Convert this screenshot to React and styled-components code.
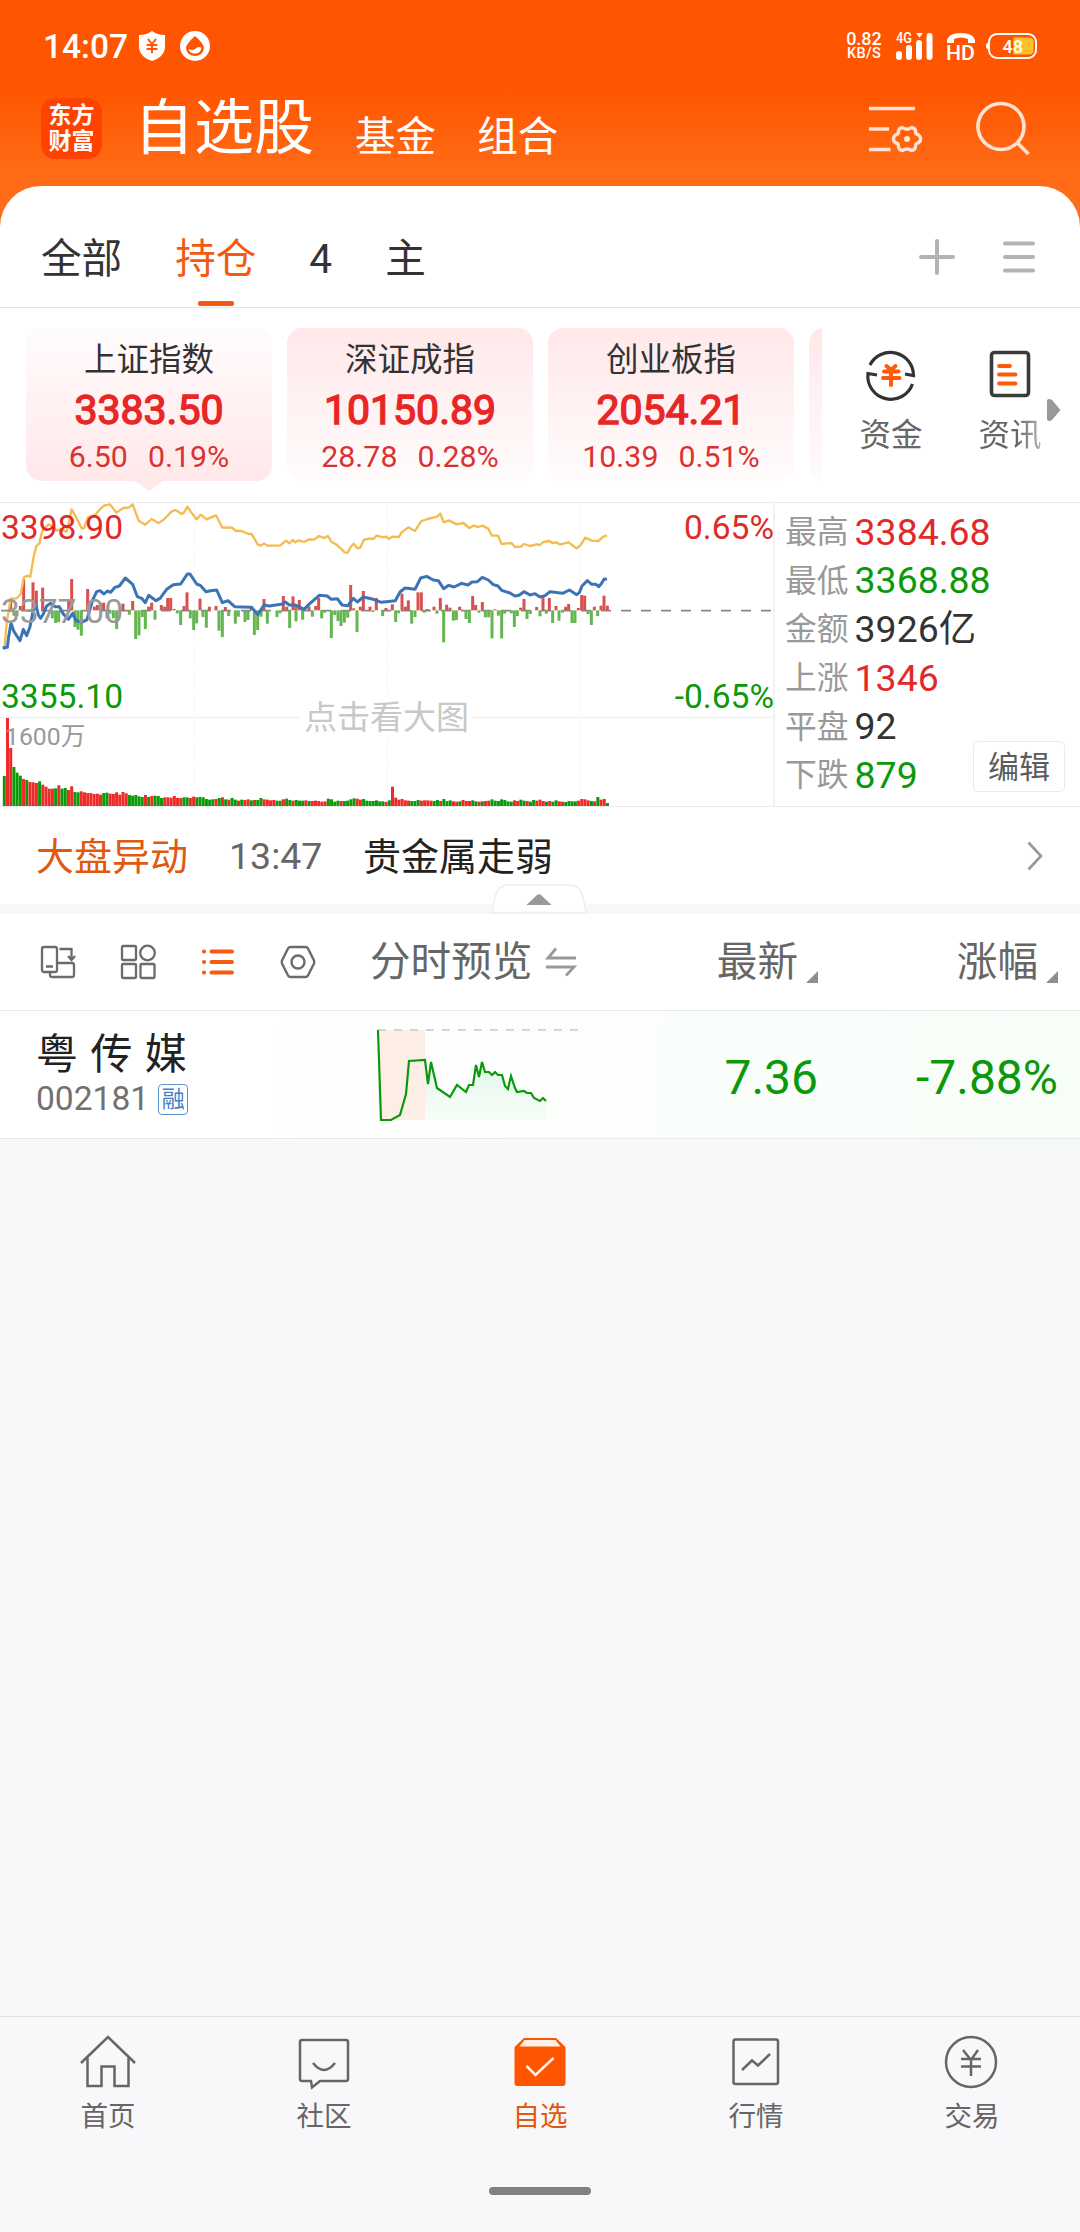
import React, { useState } from "react";
import styled, { createGlobalStyle } from "styled-components";

const RED = "#e02a2a";
const GREEN = "#0b990b";
const ORANGE = "#ff5500";

const GlobalStyle = createGlobalStyle`
  * {
    box-sizing: border-box;
  }
  body {
    margin: 0;
    background: #f7f8fa;
    font-family: Roboto, "Noto Sans CJK SC", sans-serif;
    line-height: 1;
  }
  svg {
    display: block;
    flex: none;
    overflow: visible;
  }
`;

const Page = styled.div`
  display: flex;
  flex-direction: column;
  width: 1080px;
  height: 2232px;
  overflow: hidden;
  background: #f7f8fa
    linear-gradient(#ff5500 0, #ff5500 88px, #ff6b17 172px, #ff6e1a 240px)
    no-repeat 0 0 / 100% 240px;
`;

/* ---------- header ---------- */
const StatusBar = styled.div`
  display: flex;
  align-items: center;
  height: 92px;
  padding: 0 42px 0 43px;
  color: #fff;
`;
const Clock = styled.span`
  width: 96px;
  font-size: 33.5px;
  font-weight: 500;
  padding-top: 1px;
`;
const StatusGroup = styled.div`
  display: flex;
  align-items: center;
  gap: ${(props) => props.gap}px;
  margin-left: ${(props) => props.right && "auto"};
`;
const Speed = styled.div`
  display: flex;
  flex-direction: column;
  align-items: center;
  width: 36px;
  margin-right: 4px;
  font-weight: 500;
  white-space: nowrap;
  span:first-child {
    font-size: 18px;
    line-height: 15px;
  }
  span:last-child {
    font-size: 14.5px;
    line-height: 15px;
    letter-spacing: 0.3px;
  }
`;
const TitleBar = styled.div`
  display: flex;
  align-items: center;
  height: 94px;
  padding: 0 50px 21px 41px;
`;
const Logo = styled.div`
  display: flex;
  align-items: center;
  justify-content: center;
  width: 61px;
  height: 61px;
  margin-right: 32px;
  padding-top: 1px;
  border-radius: 14px;
  background: #ff4102;
  color: #fff;
  font-size: 23px;
  font-weight: 700;
  line-height: 26px;
  text-align: center;
`;
const Titles = styled.div`
  display: flex;
  align-items: flex-end;
  gap: 41px;
  color: #fff;
`;
const Title = styled.span`
  font-size: ${(props) => (props.main ? 60 : 40.6)}px;
  padding-bottom: ${(props) => !props.main && "1px"};
`;
const HeadIcons = styled.div`
  display: flex;
  align-items: center;
  gap: 54px;
  margin-left: auto;
`;

/* ---------- sheet ---------- */
const Sheet = styled.div`
  background: #fff;
  border-radius: 41px 41px 0 0;
`;
const Tabs = styled.div`
  display: flex;
  align-items: stretch;
  gap: 53px;
  height: 122px;
  padding: 0 44px 0 41px;
  border-bottom: 1px solid #e4e4e6;
`;
const Tab = styled.span`
  display: flex;
  flex-direction: column;
  align-items: center;
  padding-top: 53px;
  font-size: 40.6px;
  color: ${(props) => (props.active ? "#f45a0f" : "#333")};
  cursor: pointer;
  &::after {
    content: "";
    width: 36px;
    height: 5px;
    margin: auto 0 1px;
    border-radius: 2px;
    background: ${(props) => props.active && "#f45a0f"};
    display: ${(props) => !props.active && "none"};
  }
`;
const TabIcons = styled.div`
  display: flex;
  align-items: center;
  gap: 45px;
  margin-left: auto;
  padding-top: 20px;
`;
const IndexRow = styled.div`
  display: flex;
  height: 194px;
  padding-top: 20px;
`;
const Cards = styled.div`
  display: flex;
  gap: 15px;
  width: 822px;
  height: 174px;
  padding-left: 26px;
  overflow: hidden;
`;
const Card = styled.div`
  position: relative;
  flex: none;
  display: flex;
  flex-direction: column;
  align-items: center;
  width: 246px;
  height: 153px;
  padding-top: 15px;
  border-radius: 15px;
  background: ${(props) =>
    props.active
      ? "linear-gradient(#fffcfc, #ffe8ea)"
      : "linear-gradient(#ffe8ea, #fffcfc)"};
  &::after {
    content: "";
    display: ${(props) => !props.active && "none"};
    position: absolute;
    top: 153px;
    left: 109px;
    border: 14px solid transparent;
    border-width: 10px 14px 0;
    border-top-color: #ffe8ea;
  }
`;
const CardName = styled.span`
  font-size: 32.5px;
  line-height: 34px;
  color: #333;
`;
const CardPrice = styled.span`
  margin-top: 12px;
  font-size: 41px;
  line-height: 42px;
  color: #e82626;
  -webkit-text-stroke: 1.4px #e82626;
`;
const CardChange = styled.div`
  display: flex;
  gap: 20px;
  margin-top: 10px;
  font-size: 30.3px;
  line-height: 32px;
  color: #d93232;
`;
const Shortcut = styled.div`
  display: flex;
  flex-direction: column;
  align-items: center;
  gap: 20px;
  width: ${(props) => props.width}px;
  padding-top: 20px;
  font-size: 31.5px;
  color: #666;
  & + & {
    margin-left: 13px;
  }
`;
const FadeText = styled.span`
  background: linear-gradient(90deg, #666 60%, #b5b5b5);
  background-clip: text;
  color: transparent;
`;
const MoreArrow = styled.div`
  padding-top: 71px;
`;

/* ---------- index chart ---------- */
const Market = styled.div`
  display: flex;
  height: 305px;
  border-top: 1px solid #ececec;
  border-bottom: 1px solid #ececec;
`;
const ChartBox = styled.div`
  position: relative;
  width: 775px;
  height: 303px;
  border-right: 2px solid #f2f2f2;
`;
const ChartLabel = styled.span`
  position: absolute;
  top: ${(props) => props.top}px;
  left: ${(props) => !props.right && "1px"};
  right: ${(props) => props.right && "-1px"};
  font-size: 33.6px;
  color: ${(props) => props.color};
`;
const VolumeLabel = styled.span`
  position: absolute;
  top: 222px;
  left: 5px;
  font-size: 24.8px;
  color: #999;
`;
const ChartHint = styled.span`
  position: absolute;
  top: 195px;
  left: 300px;
  width: 173px;
  font-size: 33px;
  line-height: 40px;
  text-align: center;
  color: #c8c8c8;
  background: #fff;
`;
const Stats = styled.div`
  position: relative;
  flex: 1;
  display: flex;
  flex-direction: column;
  padding: 5px 0 0 10px;
`;
const Stat = styled.div`
  display: flex;
  align-items: center;
  gap: 6px;
  height: 48.7px;
  font-size: 37.4px;
  color: ${(props) => props.color};
  span {
    padding-top: 1px;
    font-size: 31.8px;
    color: #999;
  }
`;
const EditButton = styled.button`
  position: absolute;
  right: 15px;
  bottom: 14px;
  width: 92px;
  height: 51px;
  padding: 0 0 4px;
  border: 1px solid #ebebeb;
  border-radius: 5px;
  background: #fff;
  font-family: inherit;
  font-size: 31px;
  color: #5c5c5c;
`;
const News = styled.div`
  position: relative;
  display: flex;
  align-items: center;
  height: 97px;
  padding: 2px 37px 0 36px;
  font-size: 38px;
  color: #222;
`;
const NewsTag = styled.span`
  width: 193px;
  color: #e0590f;
`;
const NewsTime = styled.span`
  width: 134px;
  font-size: 37.5px;
  color: #666;
`;
const NewsArrow = styled.div`
  margin-left: auto;
  padding-bottom: 2px;
`;
const Handle = styled.div`
  position: absolute;
  top: 77px;
  left: 491px;
`;
const Band = styled.div`
  height: 10px;
  background: #f6f7f9;
`;

/* ---------- stock list ---------- */
const ListHead = styled.div`
  display: flex;
  align-items: center;
  height: 97px;
  padding: 0 22px 0 41px;
  border-bottom: 1px solid #e9e9e9;
  font-size: 40.6px;
  color: #666;
`;
const ViewIcons = styled.div`
  display: flex;
  align-items: center;
  gap: 46px;
  width: 329px;
`;
const HeadCell = styled.div`
  display: flex;
  align-items: center;
  gap: ${(props) => (props.sort ? 8 : 14)}px;
  justify-content: ${(props) => props.sort && "flex-end"};
  width: ${(props) => props.width}px;
`;
const Corner = styled.i`
  align-self: flex-end;
  border: 6.5px solid #8e8e93;
  border-top-color: transparent;
  border-left-color: transparent;
  margin-bottom: -1px;
`;
const StockRow = styled.div`
  display: flex;
  align-items: center;
  height: 128px;
  padding: 0 22px 0 36px;
  border-bottom: 1px solid #e9e9e9;
  background: linear-gradient(90deg, #fff 25%, #fafefb 70%, #f7fdf7);
`;
const StockName = styled.div`
  display: flex;
  flex-direction: column;
  gap: 6px;
  width: 340px;
  padding-top: 1px;
  font-size: 42px;
  word-spacing: 2px;
  color: #222;
`;
const StockCode = styled.div`
  display: flex;
  align-items: center;
  gap: 9px;
  font-size: 33.6px;
  color: #717171;
`;
const Badge = styled.span`
  width: 30px;
  height: 31px;
  border: 1.5px solid #5b94cf;
  border-radius: 4px;
  font-size: 23px;
  line-height: 29px;
  text-align: center;
  color: #4383c4;
`;
const Quote = styled.span`
  width: ${(props) => props.width}px;
  padding-top: 6px;
  font-size: 48px;
  text-align: right;
  color: ${GREEN};
`;

/* ---------- bottom navigation ---------- */
const BottomNav = styled.div`
  margin-top: auto;
  height: 216px;
  border-top: 1px solid #e0e0e2;
  background: #f8f8fa;
`;
const NavItems = styled.div`
  display: grid;
  grid-template-columns: repeat(5, 1fr);
  height: 170px;
  padding-top: 17px;
`;
const NavItem = styled.div`
  display: flex;
  flex-direction: column;
  align-items: center;
  gap: 13px;
  font-size: 27.5px;
  color: ${(props) => (props.active ? "#e0590f" : "#666")};
  cursor: pointer;
`;
const HomeBar = styled.div`
  width: 102px;
  height: 8px;
  margin: 0 auto;
  border-radius: 4px;
  background: #808080;
`;

/* chart series use three units per pixel */
const avgLine =
  "13,480 20,400 32,326 50,325 62,312 72,262 82,257 91,260 100,205 109,168 118,160 127,122 146,103 158,110 170,122 180,118 200,125 206,100 215,58 225,75 235,95 246,116 252,114 264,82 275,78 285,75 300,58 312,47 330,43 349,68 370,54 388,52 398,43 408,70 416,92 436,104 455,87 475,99 490,90 515,64 527,60 545,72 553,66 562,50 572,65 590,88 602,74 620,88 648,76 667,113 695,112 708,123 725,123 745,132 755,132 773,163 783,167 792,160 802,167 840,167 858,152 868,160 878,150 886,157 896,151 912,156 928,148 942,149 957,138 972,144 984,138 994,155 1010,164 1034,187 1043,188 1052,171 1061,161 1072,175 1081,173 1091,150 1110,145 1120,147 1130,137 1150,142 1158,140 1167,146 1177,140 1196,141 1206,126 1225,112 1245,123 1263,94 1282,87 1312,80 1321,71 1331,97 1346,91 1370,103 1390,99 1408,114 1420,107 1435,111 1447,107 1465,116 1476,137 1494,137 1505,162 1534,159 1545,171 1563,170 1572,162 1590,168 1610,163 1620,165 1630,156 1648,153 1657,159 1668,157 1680,163 1706,157 1720,168 1730,175 1742,165 1756,143 1775,152 1795,153 1810,140 1821,136";
const priceLine =
  "8,473 22,472 26,440 33,400 42,425 50,437 60,452 70,418 80,437 90,410 100,360 108,345 115,375 122,385 130,372 140,348 152,340 165,350 178,350 190,372 205,388 218,370 228,392 245,396 260,390 268,365 278,330 290,305 300,302 312,312 322,303 332,307 345,292 358,288 376,264 398,283 412,320 425,325 436,338 446,316 468,332 480,325 500,298 520,284 542,282 562,252 570,252 590,282 602,287 618,305 632,302 650,300 667,338 684,332 704,350 755,352 773,374 792,345 808,348 848,342 856,336 868,345 886,345 912,358 930,340 958,316 982,318 994,328 1012,326 1026,345 1044,347 1052,335 1060,325 1072,336 1090,321 1120,328 1144,337 1186,332 1200,306 1215,294 1245,298 1262,264 1280,259 1300,270 1315,272 1331,296 1346,286 1362,291 1385,280 1404,285 1416,276 1432,275 1447,262 1465,270 1480,284 1494,288 1505,301 1530,309 1545,318 1557,316 1572,305 1590,315 1605,311 1620,321 1635,317 1650,305 1688,310 1708,300 1730,314 1738,308 1746,288 1762,272 1775,283 1788,283 1796,290 1805,280 1812,268 1821,267";
const flowBars =
  "32,330 61,348 71,268 99,277 109,302 128,293 206,330 215,267 263,297 283,350 292,345 302,340 311,338 369,341 398,333 446,350 455,338 484,345 494,350 503,324 512,324 522,357 552,348 561,307 600,326 628,350 648,348 676,351 754,350 792,327 850,318 860,350 879,319 888,345 898,330 927,350 947,348 956,324 1052,285 1061,355 1081,350 1090,303 1110,350 1129,324 1158,354 1177,343 1206,311 1216,350 1225,331 1254,307 1264,307 1282,357 1302,350 1321,324 1340,344 1350,353 1379,350 1418,318 1427,345 1447,336 1485,358 1562,353 1572,327 1610,351 1629,318 1648,324 1668,348 1697,350 1706,342 1735,354 1745,315 1754,317 1783,350 1803,347 1812,317 1822,347 " +
  "42,377 51,377 157,385 167,399 176,396 186,370 225,411 234,419 244,437 321,385 330,371 340,385 350,417 388,374 407,447 417,436 427,381 436,417 465,389 532,370 542,405 571,385 581,420 590,400 609,381 619,413 657,422 667,441 686,378 706,401 715,380 735,396 744,390 763,435 773,420 783,380 802,401 831,381 840,370 869,414 888,394 908,389 937,380 965,385 974,368 994,444 1004,375 1014,393 1023,408 1033,398 1043,383 1071,426 1119,366 1148,378 1187,396 1196,370 1235,401 1245,381 1273,368 1311,371 1331,457 1360,392 1369,390 1398,387 1408,399 1437,368 1456,382 1466,382 1476,445 1495,377 1505,445 1514,371 1534,370 1543,411 1552,378 1581,387 1591,372 1620,379 1639,371 1658,399 1677,392 1687,368 1716,399 1725,399 1764,372 1774,405 1793,378";
const volumes = [
  90, 264, 174, 117, 100, 91, 81, 78, 72, 71, 69, 74, 64, 58, 52, 52, 53, 62,
  52, 54, 48, 59, 42, 41, 44, 41, 39, 39, 36, 37, 34, 39, 40, 37, 36, 41, 34,
  42, 38, 33, 31, 33, 29, 27, 33, 27, 30, 31, 30, 24, 26, 26, 25, 30, 24, 24,
  26, 26, 24, 28, 26, 27, 26, 21, 19, 20, 21, 24, 26, 20, 19, 24, 19, 16, 19,
  18, 20, 17, 18, 18, 24, 20, 19, 17, 18, 16, 16, 20, 22, 18, 16, 18, 16, 16,
  17, 15, 15, 16, 15, 13, 14, 22, 20, 13, 16, 15, 15, 16, 20, 23, 22, 19, 21,
  16, 15, 15, 17, 14, 14, 12, 17, 58, 25, 19, 21, 17, 16, 15, 15, 18, 16, 17,
  17, 16, 15, 18, 15, 21, 15, 17, 14, 13, 14, 18, 15, 15, 17, 14, 13, 14, 15,
  16, 20, 16, 15, 20, 18, 14, 13, 17, 15, 19, 16, 15, 13, 18, 16, 19, 15, 13,
  15, 13, 17, 14, 13, 12, 15, 14, 14, 16, 21, 20, 17, 15, 14, 27, 19, 21, 9,
];
const volumeColors =
  "grrgggrgrrrgrrrrgrggrrggrrrrrrrggrrrrrrgggggrgrgggrrrrrrggrr" +
  "ggggggrgrgrggrgrrgrggrrrrggrggrgggrgrrrrrggggrggggrrg" +
  "ggggggrgrrrrrrgggrrrrggrgggrrgrrrggrgrrgggggggrrggrggrrrgrggrrggggrrrrgrgrrg";

const stockLine =
  "1,0 4,90 14,90 23,85 29,64 32,31 48,30 51,54 54,32 60,58 73,67 80,55 89,62 92,55 96,55 99,35 102,47 105,32 108,42 112,42 115,45 118,42 121,45 125,45 128,56 131,59 134,46 138,58 140,62 147,61 150,63 154,63 157,68 163,71 166,68 169,71";

const toPoints = (str) => str.split(" ").map((el) => el.split(",").map(Number));

const IndexChart = () => (
  <svg width="775" height="303" viewBox="0 39 2325 909">
    <path d="M583 42V948M1162 42V948M1741 42V948" stroke="#e6e6e6" strokeWidth="3" strokeDasharray="3 6" />
    <path d="M0 682H2322" stroke="#ececec" strokeWidth="3" />
    <path d="M3 362H2322" stroke="#888" strokeWidth="5" strokeDasharray="30 30" />
    {toPoints(flowBars).map(([x, y], i) => (
      <rect
        key={i}
        x={x - 4.5}
        y={Math.min(y, 361)}
        width="9"
        height={Math.abs(y - 361)}
        fill={y < 361 ? "#d85050" : "#65b551"}
      />
    ))}
    {volumes.map((v, i) => (
      <rect
        key={i}
        x={8.4 + i * 9.625}
        y={948 - v}
        width="9"
        height={v}
        fill={volumeColors[i] === "r" ? "#ee2a2a" : "#0a9b0a"}
      />
    ))}
    <polyline points={avgLine} fill="none" stroke="#f6bb4f" strokeWidth="7" strokeLinejoin="round" />
    <polyline points={priceLine} fill="none" stroke="#3b73b5" strokeWidth="9" strokeLinejoin="round" />
  </svg>
);

const StockChart = () => (
  <svg width="203" height="96" viewBox="-1 -3 203 96">
    <defs>
      <linearGradient id="fade" x1="0" y1="0" x2="0" y2="1">
        <stop offset="0" stopColor="#d8f3e0" />
        <stop offset="1" stopColor="#f8fdf9" />
      </linearGradient>
    </defs>
    <polygon points={`${stockLine} 169,90 1,90`} fill="url(#fade)" />
    <rect x="3" width="45" height="90" fill="#fdeee5" />
    <path d="M1 0H201" stroke="#d4d4d6" strokeWidth="2" strokeDasharray="8 8" />
    <polyline points={stockLine} fill="none" stroke={GREEN} strokeWidth="2.200" />
  </svg>
);

const indexes = [
  { name: "上证指数", price: "3383.50", diff: "6.50", rate: "0.19%" },
  { name: "深证成指", price: "10150.89", diff: "28.78", rate: "0.28%" },
  { name: "创业板指", price: "2054.21", diff: "10.39", rate: "0.51%" },
];

const stats = [
  { label: "最高", value: "3384.68", color: RED },
  { label: "最低", value: "3368.88", color: GREEN },
  { label: "金额", value: "3926亿", color: "#333" },
  { label: "上涨", value: "1346", color: RED },
  { label: "平盘", value: "92", color: "#333" },
  { label: "下跌", value: "879", color: GREEN },
];

const navItems = [
  {
    title: "首页",
    icon: (
      <g>
        <path d="M1 29L28 3L55 29" />
        <path d="M7.500 24V52H21.500V32.500H34.500V52H48.500V24" />
      </g>
    ),
  },
  {
    title: "社区",
    icon: (
      <g>
        <path d="M6 6H50Q52 6 52 8V45Q52 47 50 47H24L16 53.500L15 47H6Q4 47 4 45V8Q4 6 6 6Z" />
        <path d="M17 29Q28 43 39 29" />
      </g>
    ),
  },
  {
    title: "自选",
    icon: (
      <g stroke="none">
        <path d="M12 4H44L53.500 13V49Q53.500 52 50.500 52H5.500Q2.500 52 2.500 49V13Z" fill={ORANGE} />
        <path d="M12.500 6H43.500L48.500 12.500H7.500Z" fill="#fff1e8" />
        <path d="M14.500 32L23.500 41L41.500 24" fill="none" stroke="#fff3ec" strokeWidth="2.500" />
      </g>
    ),
  },
  {
    title: "行情",
    icon: (
      <g>
        <rect x="5.500" y="5.500" width="44.500" height="44.500" rx="2" />
        <path d="M14 36L24 26.500L30 31.500L42 20" />
      </g>
    ),
  },
  {
    title: "交易",
    icon: (
      <g>
        <circle cx="27" cy="28" r="25" />
        <path d="M19 16L27 26L34 16M17 25H37M17 32.500H37M27 26V42" />
      </g>
    ),
  },
];

const App = () => {
  const [tab, setTab] = useState("持仓");
  const [nav, setNav] = useState("自选");
  return (
    <Page>
      <GlobalStyle />
      <StatusBar>
        <Clock>14:07</Clock>
        <StatusGroup gap={15}>
          <svg width="26" height="30" viewBox="0 0 26 30">
            <path d="M13 0Q18 4 26 4V17Q25 26 13 30Q1 26 0 17V4Q8 4 13 0Z" fill="#fff" />
            <path d="M9 8L13 13L17 8M7.500 14H18.500M7.500 18H18.500M13 13V22" stroke={ORANGE} strokeWidth="2" fill="none" />
          </svg>
          <svg width="30" height="30" viewBox="0 0 30 30">
            <circle cx="15" cy="15" r="15" fill="#fff" />
            <path d="M15 5Q24 13 24 17A9 8 0 0 1 6 17Q6 13 15 5Z" fill={ORANGE} />
            <path d="M8.500 18Q13 20 16 17.500T21.500 17Q20.500 22.500 15 22.500T8.500 18Z" fill="#fff" />
          </svg>
        </StatusGroup>
        <StatusGroup right gap={10}>
          <Speed>
            <span>0.82</span>
            <span>KB/S</span>
          </Speed>
          <svg width="40" height="30" viewBox="0 0 40 30" fill="#fff">
            <text x="0" y="11.500" fontSize="14" fontWeight="500" textLength="16" lengthAdjust="spacingAndGlyphs">4G</text>
            <path d="M20 2H27L23.500 6.500Z" />
            <rect x="0" y="20" width="6" height="9" rx="3" />
            <rect x="10" y="14" width="6" height="15" rx="3" />
            <rect x="20" y="9" width="6" height="20" rx="3" />
            <rect x="30.500" y="2" width="6" height="27" rx="3" />
          </svg>
          <svg width="30" height="30" viewBox="-1 0 30 30" fill="#fff">
            <path d="M0 9Q2 2 14 2T28 9V12H21V8Q14 5 7 8V12H0Z" />
            <text x="-1" y="28.500" fontSize="21" fontWeight="500" textLength="29" lengthAdjust="spacingAndGlyphs">HD</text>
          </svg>
          <svg width="52" height="28" viewBox="0 0 52 28">
            <rect x="3" y="2" width="47" height="24" rx="8" fill="none" stroke="#fff" strokeWidth="2" />
            <path d="M3 10Q0 11 0 14T3 18Z" fill="#fff" />
            <path d="M27.500 5.500H43Q47.500 5.500 47.500 10V18Q47.500 22.500 43 22.500H27.500Z" fill="#ffc02c" />
            <text x="16.500" y="20.500" fontSize="18" fontWeight="500" fill="#fff">48</text>
          </svg>
        </StatusGroup>
      </StatusBar>

      <TitleBar>
        <Logo>
          东方
          <br />
          财富
        </Logo>
        <Titles>
          <Title main>自选股</Title>
          <Title>基金</Title>
          <Title>组合</Title>
        </Titles>
        <HeadIcons>
          <svg width="54" height="54" viewBox="0 0 54 54" fill="none" stroke="#ffe3d2" strokeWidth="3.600">
            <path d="M1 6.500H47M1 27H21M1 47.500H22.500" />
            <path
              d="M34.500 25.500Q39 29 43.500 25.500Q48 26 47.800 31.500Q53 34 52.500 37Q53 40 47.800 42Q48 48 43.500 48.500Q39 45.500 34.500 48.500Q30 48 30.200 42Q25 40 25.500 37Q25 34 30.200 31.500Q30 26 34.500 25.500Z"
              strokeWidth="3.400"
              strokeLinejoin="round"
            />
            <circle cx="39" cy="37" r="3" fill="#ffe3d2" stroke="none" />
          </svg>
          <svg width="54" height="54" viewBox="0 0 54 54" fill="none" stroke="#ffe3d2" strokeWidth="3.600">
            <circle cx="25" cy="24.500" r="23" />
            <path d="M41 40.500L52.500 52" />
          </svg>
        </HeadIcons>
      </TitleBar>

      <Sheet>
        <Tabs>
          {["全部", "持仓", "4", "主"].map((el) => (
            <Tab key={el} active={tab === el} onClick={() => setTab(el)}>
              {el}
            </Tab>
          ))}
          <TabIcons>
            <svg width="36" height="36" viewBox="0 0 36 36" stroke="#b3b3b3" strokeWidth="4" strokeLinecap="round">
              <path d="M18 2V34M2 18H34" />
            </svg>
            <svg width="36" height="36" viewBox="0 0 36 36" stroke="#b3b3b3" strokeWidth="4" strokeLinecap="round">
              <path d="M5 4.500H33M5 18H33M5 31.500H33" />
            </svg>
          </TabIcons>
        </Tabs>

        <IndexRow>
          <Cards>
            {indexes.map((el, i) => (
              <Card key={el.name} active={i === 0}>
                <CardName>{el.name}</CardName>
                <CardPrice>{el.price}</CardPrice>
                <CardChange>
                  <span>{el.diff}</span>
                  <span>{el.rate}</span>
                </CardChange>
              </Card>
            ))}
            <Card />
          </Cards>
          <Shortcut width={138}>
            <svg width="52" height="52" viewBox="0 0 52 52" fill="none">
              <path d="M5 17A23 23 0 0 1 48.500 27.500L40 26M47.500 36A23 23 0 0 1 3 25.500L12 27" stroke="#333" strokeWidth="3.200" />
              <path d="M21.500 18L26 22L30.500 18M19 23.500H33.500M18 30H34.500M26 22V37" stroke="#ff5a08" strokeWidth="4" strokeLinecap="round" />
            </svg>
            资金
          </Shortcut>
          <Shortcut width={74}>
            <svg width="52" height="52" viewBox="0 0 52 52" fill="none">
              <rect x="7.500" y="4.500" width="37" height="43" rx="3" stroke="#3b3b3b" strokeWidth="3.600" />
              <path d="M15 18H26M15 26.500H31.500M15 35.500H31.500" stroke="#ff5a08" strokeWidth="3.800" strokeLinecap="round" />
            </svg>
            <FadeText>资讯</FadeText>
          </Shortcut>
          <MoreArrow>
            <svg width="14" height="22" viewBox="0 0 14 22">
              <path d="M0 2Q0 0 2 0Q4 0 5 1L13.500 11L5 21Q4 22 2 22Q0 22 0 20Z" fill="#999" />
            </svg>
          </MoreArrow>
        </IndexRow>

        <Market>
          <ChartBox>
            <IndexChart />
            <ChartLabel top={8} color={RED}>3398.90</ChartLabel>
            <ChartLabel top={92} color="#999">3377.00</ChartLabel>
            <ChartLabel top={177} color={GREEN}>3355.10</ChartLabel>
            <ChartLabel top={8} color={RED} right>0.65%</ChartLabel>
            <ChartLabel top={177} color={GREEN} right>-0.65%</ChartLabel>
            <VolumeLabel>1600万</VolumeLabel>
            <ChartHint>点击看大图</ChartHint>
          </ChartBox>
          <Stats>
            {stats.map((el) => (
              <Stat key={el.label} color={el.color}>
                <span>{el.label}</span>
                {el.value}
              </Stat>
            ))}
            <EditButton>编辑</EditButton>
          </Stats>
        </Market>

        <News>
          <NewsTag>大盘异动</NewsTag>
          <NewsTime>13:47</NewsTime>
          贵金属走弱
          <NewsArrow>
            <svg width="16" height="30" viewBox="0 0 16 30">
              <path d="M1.500 1.500L14 15L1.500 28.500" fill="none" stroke="#999" strokeWidth="2.600" />
            </svg>
          </NewsArrow>
          <Handle>
            <svg width="96" height="30" viewBox="0 0 96 30">
              <path d="M1 28.500L4 13Q7 1 18 1H78Q89 1 92 13L95 28.500Z" fill="#fff" stroke="#ededee" strokeWidth="1.300" />
              <path d="M35.500 21L46 11Q48 9.500 50 11L60.500 21Z" fill="#999" />
            </svg>
          </Handle>
        </News>
        <Band />

        <ListHead>
          <ViewIcons>
            <svg width="34" height="34" viewBox="0 0 34 34" fill="none" stroke="#6b6b6b" strokeWidth="2.300">
              <rect x="1" y="2" width="15" height="25" rx="2" />
              <path d="M5 21.500H12M18.500 4H30.500V14M27 11L30.500 15L34 11" />
              <path d="M16 18H31Q33 18 33 20V30Q33 32 31 32H11Q9 32 9 30V27" />
            </svg>
            <svg width="34" height="36" viewBox="0 0 34 36" fill="none" stroke="#6b6b6b" strokeWidth="2.300">
              <rect x="1" y="2" width="14" height="14" rx="1" />
              <circle cx="26.500" cy="9" r="7.300" />
              <rect x="1" y="20" width="14" height="14" rx="1" />
              <rect x="19.500" y="20" width="14" height="14" rx="1" />
            </svg>
            <svg width="34" height="34" viewBox="0 0 34 34" stroke="#f55b10" strokeWidth="4" strokeLinecap="round">
              <path d="M3 6.500H3.100M10.500 6.500H31M3 17H3.100M10.500 17H31M3 27.500H3.100M10.500 27.500H31" />
            </svg>
            <svg width="36" height="34" viewBox="1 0 36 34" fill="none" stroke="#6b6b6b" strokeWidth="2.400">
              <path d="M10.500 2H25.500Q27 2 28 3.500L34 15.500Q34.500 17 34 18.500L28 30.500Q27 32 25.500 32H10.500Q9 32 8 30.500L2 18.500Q1.500 17 2 15.500L8 3.500Q9 2 10.500 2Z" />
              <circle cx="18" cy="17" r="6.500" />
            </svg>
          </ViewIcons>
          <HeadCell width={241}>
            分时预览
            <svg width="30" height="30" viewBox="0 0 30 30" fill="none" stroke="#999" strokeWidth="2.800">
              <path d="M10 1.500L2 11H30M20 28.500L28 20H0" />
            </svg>
          </HeadCell>
          <HeadCell sort width={207}>
            最新
            <Corner />
          </HeadCell>
          <HeadCell sort width={240}>
            涨幅
            <Corner />
          </HeadCell>
        </ListHead>

        <StockRow>
          <StockName>
            粤 传 媒
            <StockCode>
              002181
              <Badge>融</Badge>
            </StockCode>
          </StockName>
          <StockChart />
          <Quote width={239}>7.36</Quote>
          <Quote width={240}>-7.88%</Quote>
        </StockRow>
      </Sheet>

      <BottomNav>
        <NavItems>
          {navItems.map((el) => (
            <NavItem key={el.title} active={nav === el.title} onClick={() => setNav(el.title)}>
              <svg width="56" height="56" viewBox="0 0 56 56" fill="none" stroke="#666" strokeWidth="2.500">
                {el.icon}
              </svg>
              {el.title}
            </NavItem>
          ))}
        </NavItems>
        <HomeBar />
      </BottomNav>
    </Page>
  );
};

export default App;
